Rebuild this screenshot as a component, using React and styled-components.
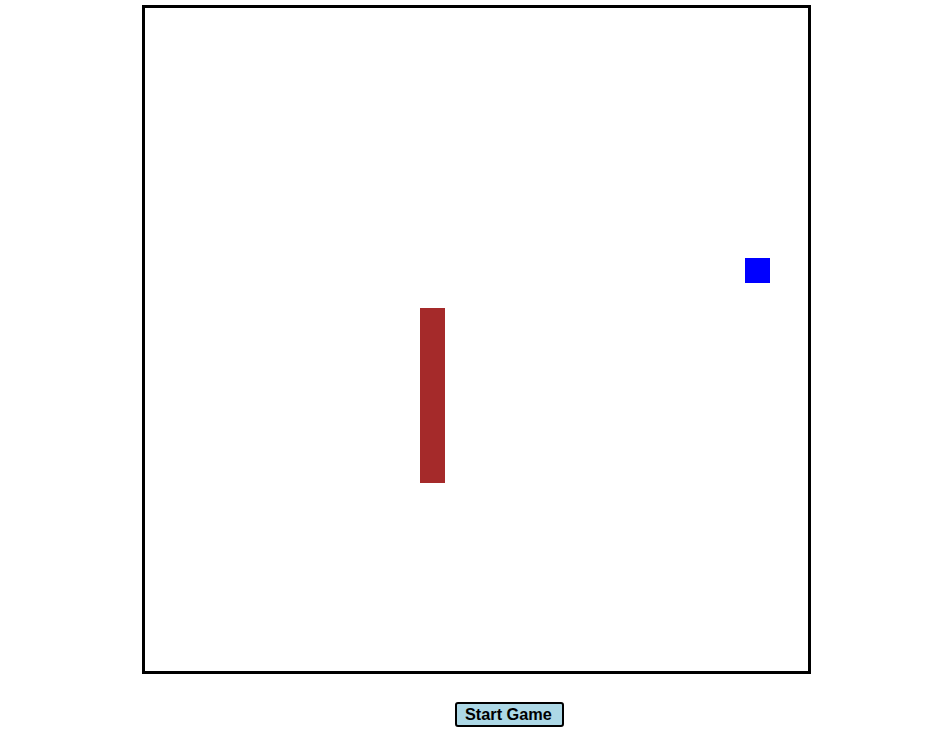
import React from 'react';
import styled, { createGlobalStyle } from 'styled-components';

const GlobalStyle = createGlobalStyle`
  html, body {
    margin: 0;
    padding: 0;
    background: #ffffff;
    font-family: "Liberation Sans", Arial, sans-serif;
  }
`;

const CELL = 25;

const snake = [
  { x: 11, y: 12 },
  { x: 11, y: 13 },
  { x: 11, y: 14 },
  { x: 11, y: 15 },
  { x: 11, y: 16 },
  { x: 11, y: 17 },
  { x: 11, y: 18 },
];

const food = { x: 24, y: 10 };

const App = () => {
  return (
    <Page>
      <GlobalStyle />
      <Board>
        {snake.map((seg, i) => (
          <Segment key={i} style={{ left: seg.x * CELL, top: seg.y * CELL }} />
        ))}
        <Food style={{ left: food.x * CELL, top: food.y * CELL }} />
      </Board>
      <Controls>
        <StartButton>Start Game</StartButton>
      </Controls>
    </Page>
  );
};

const Page = styled.div`
  display: flex;
  flex-direction: column;
  padding: 5px 0 0 142px;
`;

const Board = styled.div`
  position: relative;
  width: 663px;
  height: 663px;
  border: 3px solid #000;
  background: #fff;
`;

const Segment = styled.div`
  position: absolute;
  width: ${CELL}px;
  height: ${CELL}px;
  background: #a52a2a;
`;

const Food = styled.div`
  position: absolute;
  width: ${CELL}px;
  height: ${CELL}px;
  background: #0000ff;
`;

const Controls = styled.div`
  display: flex;
  padding: 28px 0 0 313px;
`;

const StartButton = styled.button`
  height: 25px;
  padding: 0 10px 0 8px;
  background: #add8e6;
  border: 2px solid #000;
  border-radius: 3px;
  font-family: "Liberation Sans", Arial, sans-serif;
  font-size: 16.3px;
  font-weight: bold;
  color: #000;
  cursor: pointer;
`;

export default App;
